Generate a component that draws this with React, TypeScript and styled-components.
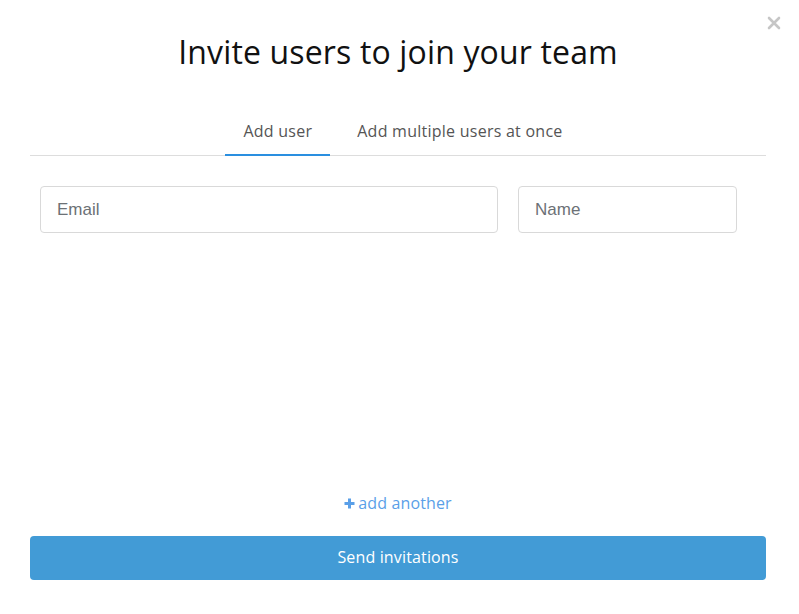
import styled, { createGlobalStyle } from "styled-components";

const GlobalStyle = createGlobalStyle`
  html, body {
    margin: 0;
    padding: 0;
    background: #fff;
  }
  * {
    box-sizing: border-box;
  }
`;

const Modal = styled.div`
  position: relative;
  width: 799px;
  height: 614px;
  padding: 32px 33px 34px 30px;
  display: flex;
  flex-direction: column;
  font-family: "Open Sans", "Liberation Sans", sans-serif;
`;

const CloseButton = styled.button`
  position: absolute;
  top: 14px;
  right: 16px;
  width: 18px;
  height: 18px;
  padding: 0;
  border: 0;
  background: none;
  cursor: pointer;
  display: flex;
  align-items: center;
  justify-content: center;
`;

const Title = styled.h1`
  margin: 0;
  font-size: 32px;
  line-height: 40px;
  font-weight: 400;
  color: #111;
  text-align: center;
  letter-spacing: 0.15px;
`;

const Tabs = styled.div`
  margin-top: 39px;
  padding-left: 10px;
  display: flex;
  justify-content: center;
  border-bottom: 1px solid #dddddd;
`;

const Tab = styled.button<{ $active?: boolean }>`
  height: 45px;
  padding: 0 18px 4px;
  margin: 0 0 -1px ${({ $active }) => ($active ? 0 : 9)}px;
  border: 0;
  border-bottom: 2px solid ${({ $active }) => ($active ? "#2a8fe0" : "transparent")};
  background: none;
  font-family: inherit;
  font-size: 16px;
  letter-spacing: 0.25px;
  color: #555;
  cursor: pointer;
`;

const Fields = styled.div`
  margin-top: 30px;
  padding: 0 28px 0 10px;
  display: flex;
  gap: 20px;
`;

const Field = styled.input<{ $width: number }>`
  flex: 0 0 ${({ $width }) => $width}px;
  width: ${({ $width }) => $width}px;
  height: 47px;
  padding: 0 16px;
  border: 1px solid #d9d9d9;
  border-radius: 4px;
  font-family: "Liberation Sans", Arial, sans-serif;
  font-size: 17px;
  color: #333;
  outline: none;
  &::placeholder {
    color: #6c7176;
  }
`;

const Spacer = styled.div`
  flex: 1;
`;

const AddAnother = styled.button`
  align-self: center;
  display: flex;
  align-items: center;
  gap: 3px;
  margin-bottom: 22px;
  border: 0;
  background: none;
  padding: 0;
  font-family: inherit;
  font-size: 16px;
  letter-spacing: 0.15px;
  color: #5a9fe8;
  cursor: pointer;
`;

const SendButton = styled.button`
  width: 736px;
  height: 44px;
  border: 0;
  border-radius: 4px;
  background: #429bd6;
  color: #fff;
  font-family: inherit;
  font-size: 16px;
  letter-spacing: 0.15px;
  padding-bottom: 4px;
  cursor: pointer;
`;

export default function App() {
  return (
    <>
      <GlobalStyle />
      <Modal>
        <CloseButton aria-label="Close">
          <svg width="14" height="14" viewBox="0 0 14 14">
            <path d="M2 2L12 12M12 2L2 12" stroke="#c6c6c6" strokeWidth="2.6" strokeLinecap="round" />
          </svg>
        </CloseButton>
        <Title>Invite users to join your team</Title>
        <Tabs>
          <Tab $active>Add user</Tab>
          <Tab>Add multiple users at once</Tab>
        </Tabs>
        <Fields>
          <Field $width={458} placeholder="Email" />
          <Field $width={219} placeholder="Name" />
        </Fields>
        <Spacer />
        <AddAnother>
          <svg width="11" height="11" viewBox="0 0 11 11">
            <path d="M5.5 0.5V10.5M0.5 5.5H10.5" stroke="#5a9fe8" strokeWidth="3" />
          </svg>
          add another
        </AddAnother>
        <SendButton>Send invitations</SendButton>
      </Modal>
    </>
  );
}
